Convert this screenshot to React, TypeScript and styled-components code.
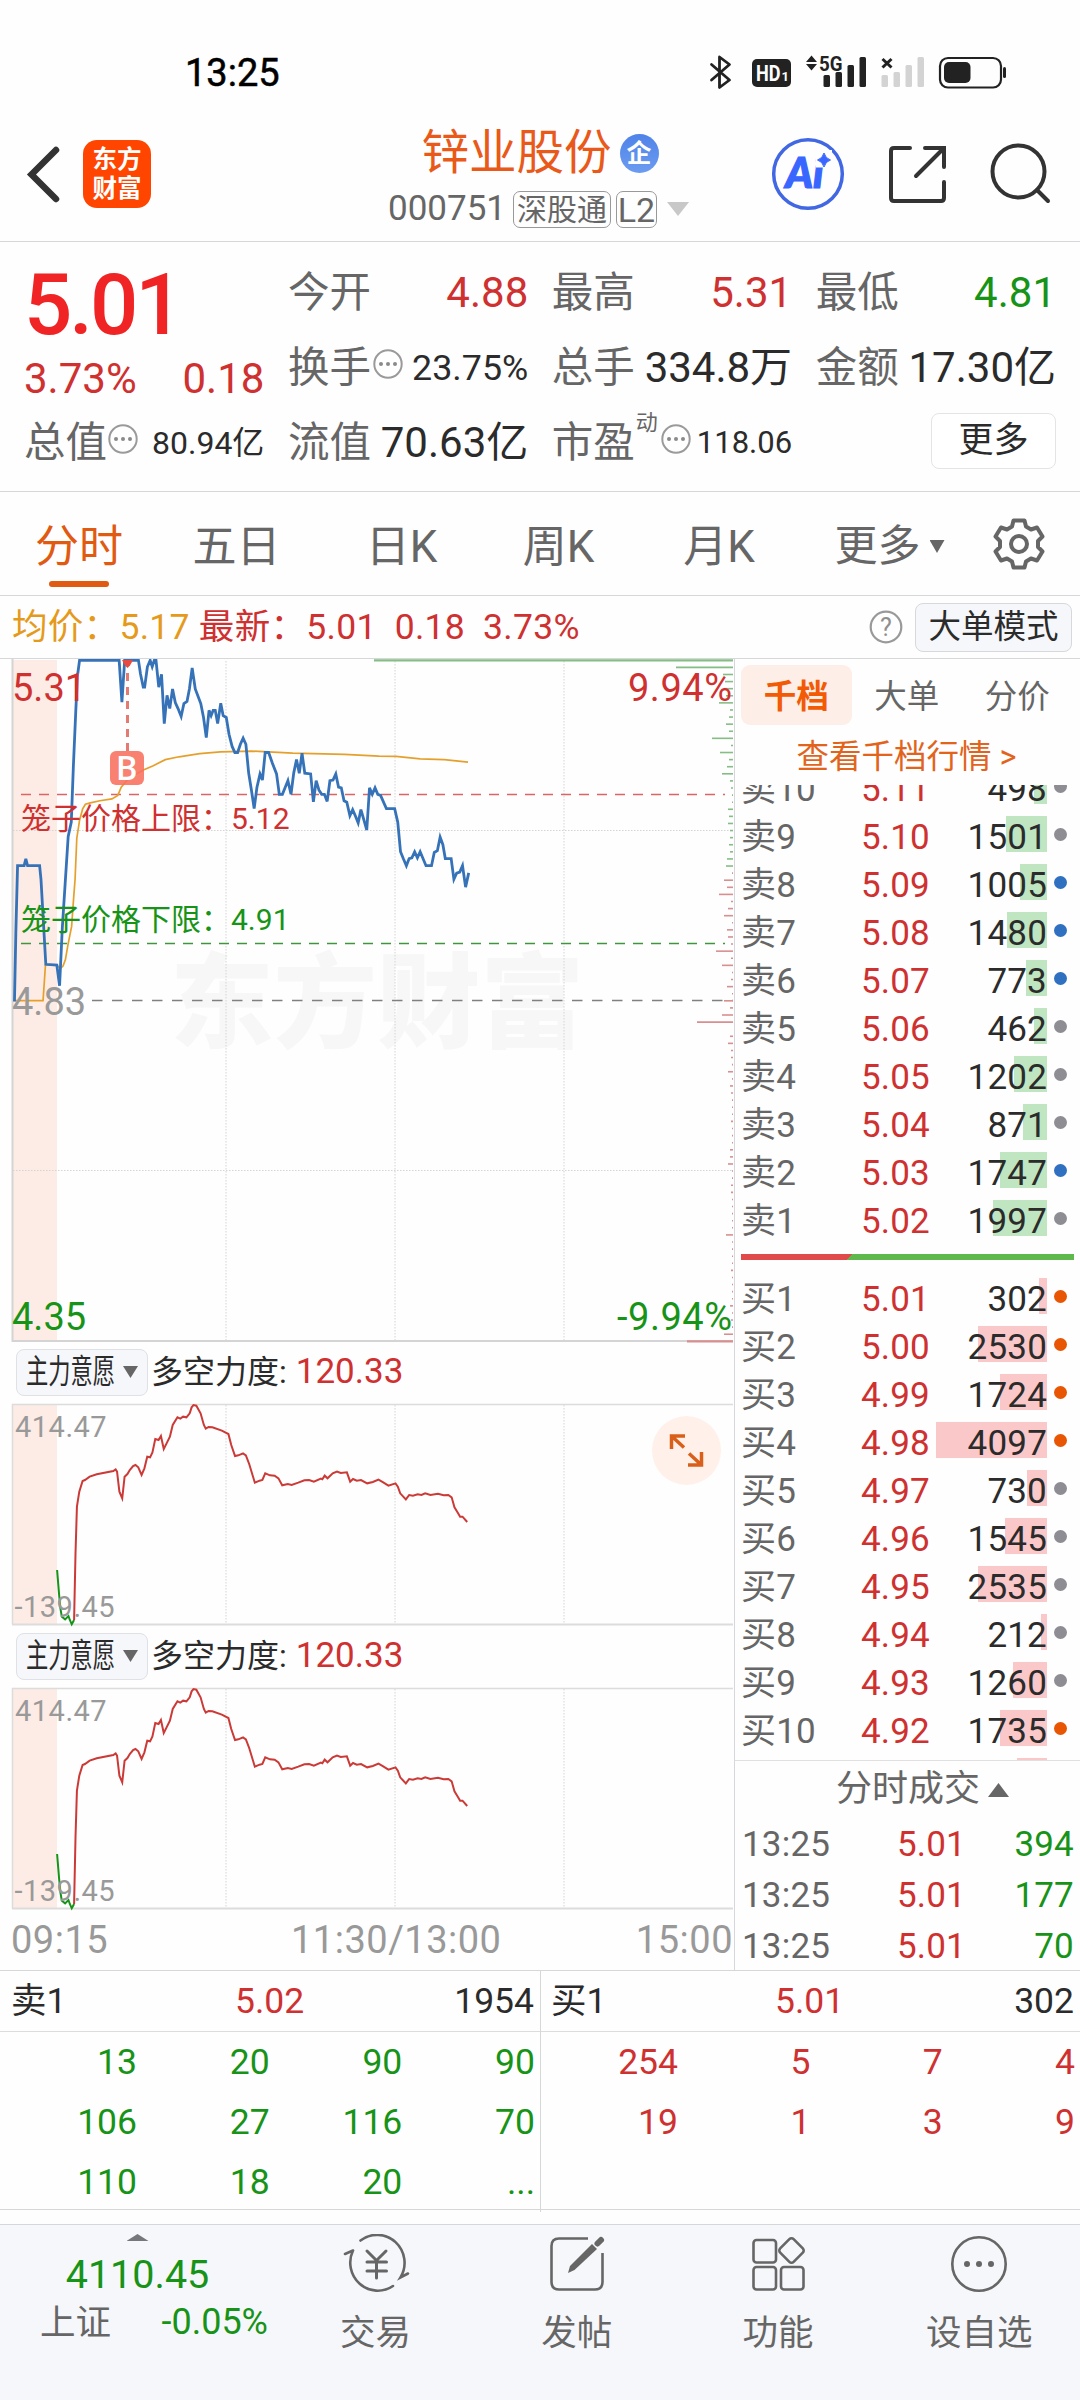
import React from "react";
import styled, { createGlobalStyle } from "styled-components";

const RED = "#cf3030";
const GREEN = "#179317";
const GRAY = "#666666";
const INK = "#2b2b2b";
const ORANGE = "#e05a12";
const LINE = "#d5d7d9";
const FONT = 'Roboto, "Noto Sans CJK SC", sans-serif';

const GlobalStyle = createGlobalStyle`
  * { box-sizing: border-box; }
  body { margin: 0; background: #fff; }
  svg { display: block; flex: none; }
`;

const Page = styled.div`
  width: 1080px;
  height: 2400px;
  overflow: hidden;
  display: flex;
  flex-direction: column;
  background: #fefefe;
  font-family: ${FONT};
  line-height: 1.2;
  color: ${INK};
  white-space: nowrap;
`;

/* ---------- status bar ---------- */
const StatusBar = styled.div`
  height: 107px;
  padding: 38px 72px 0 185px;
  display: flex;
  justify-content: space-between;
`;
const Clock = styled.div`
  height: 70px;
  line-height: 70px;
  font-size: 38px;
  -webkit-text-stroke: 0.5px #000;
  color: #000;
`;

const StatusIcons = () => (
  <svg width="300" height="38" viewBox="708 53 300 38" style={{ marginTop: 15 }}>
    <g fill="none" stroke="#222" strokeWidth="2.8" strokeLinejoin="round" strokeLinecap="round">
      <path d="M711.500 64.500L729.500 80L719.500 87.500V57L729.500 64.500L711.500 80" />
      <rect x="940" y="58" width="61" height="29.500" rx="8" strokeWidth="2.2" />
    </g>
    <g fill="#222">
      <rect x="752" y="59" width="39" height="28" rx="5" />
      <path d="M811.500 55.500L817 62H806ZM811.500 70.500L806 64H817Z" />
      <rect x="823.500" y="75" width="6.500" height="12" rx="1.500" />
      <rect x="835.500" y="72" width="6.500" height="15" rx="1.500" />
      <rect x="847.500" y="65" width="6.500" height="22" rx="1.500" />
      <rect x="859.500" y="57" width="6.500" height="30" rx="1.500" />
      <rect x="944" y="62" width="26.500" height="21" rx="5" />
      <rect x="1003" y="67" width="3" height="11" rx="1.500" />
    </g>
    <g fill="#d3d3d3">
      <rect x="881.500" y="75" width="6.500" height="12" rx="1.500" />
      <rect x="893.500" y="72" width="6.500" height="15" rx="1.500" />
      <rect x="905.500" y="65" width="6.500" height="22" rx="1.500" />
      <rect x="917.500" y="57" width="6.500" height="30" rx="1.500" />
    </g>
    <path d="M882.500 59L891.500 67.500M891.500 59L882.500 67.500" stroke="#222" strokeWidth="3" />
    <g fontFamily={FONT} fontWeight="700">
      <text x="756" y="80.500" fontSize="21.500" fill="#fff" textLength="24.500" lengthAdjust="spacingAndGlyphs">HD</text>
      <text x="781.500" y="80.500" fontSize="13" fill="#fff">1</text>
      <text x="819" y="70.500" fontSize="20" fill="#222" textLength="23.500" lengthAdjust="spacingAndGlyphs">5G</text>
    </g>
  </svg>
);

/* ---------- header ---------- */
const Header = styled.header`
  height: 135px;
  display: grid;
  grid-template-columns: 330px 1fr 330px;
  border-bottom: 1.500px solid ${LINE};
`;
const HeaderSide = styled.div<{ $end?: boolean }>`
  display: flex;
  align-items: center;
  justify-content: ${(p) => (p.$end ? "flex-end" : "flex-start")};
  padding: ${(p) => (p.$end ? "0 28px 0 0" : "0 0 0 25px")};
`;
const Logo = styled.div`
  width: 68px;
  height: 68px;
  margin-left: 20px;
  padding-top: 6px;
  border-radius: 14px;
  background: #ff4500;
  color: #fff;
  font-size: 24.500px;
  font-weight: 700;
  line-height: 28.500px;
  text-align: center;
`;
const TitleBlock = styled.div`
  padding-top: 18px;
  display: flex;
  flex-direction: column;
  align-items: center;
`;
const TitleRow = styled.div`
  height: 56px;
  display: flex;
  align-items: center;
  gap: 8px;
  font-size: 47.500px;
  line-height: 56px;
  color: #e8591a;
`;
const CorpBadge = styled.span`
  width: 39px;
  height: 39px;
  border-radius: 50%;
  background: linear-gradient(#4f83e8, #6c9cf0);
  color: #fff;
  font-size: 25px;
  font-weight: 700;
  line-height: 39px;
  text-align: center;
`;
const CodeRow = styled.div`
  height: 56px;
  padding-right: 3px;
  display: flex;
  align-items: center;
  font-size: 35px;
  color: ${GRAY};
`;
const Tag = styled.span<{ $wide?: boolean }>`
  height: 37px;
  width: ${(p) => (p.$wide ? 98 : 41)}px;
  margin-left: ${(p) => (p.$wide ? 7 : 5)}px;
  border: 1.500px solid #999;
  border-radius: 7px;
  font-size: ${(p) => (p.$wide ? 30 : 34)}px;
  line-height: 36px;
  text-align: center;
`;
const Triangle = styled.i<{ $w: number; $h: number; $c: string; $up?: boolean; $l?: number }>`
  width: ${(p) => p.$w}px;
  height: ${(p) => p.$h}px;
  margin-left: ${(p) => p.$l ?? 0}px;
  flex: none;
  background: ${(p) => p.$c};
  clip-path: ${(p) => (p.$up ? "polygon(50% 0, 100% 100%, 0 100%)" : "polygon(0 0, 100% 0, 50% 100%)")};
`;
const IconGroup = styled.div`
  display: flex;
  align-items: center;
  gap: 42px;
`;

/* ---------- quote panel ---------- */
const Quote = styled.section`
  height: 250px;
  padding: 13.500px 25px 0;
  display: grid;
  grid-template-columns: repeat(4, 1fr);
  column-gap: 25.500px;
  border-bottom: 1.500px solid ${LINE};
`;
const Cell = styled.div<{ $h?: number }>`
  height: ${(p) => p.$h ?? 75}px;
  margin: 0 -1px;
  display: flex;
  align-items: center;
  justify-content: space-between;
`;
const Label = styled.span`
  display: flex;
  align-items: center;
  font-size: 41.500px;
  color: ${GRAY};
`;
const Value = styled.span<{ $c?: string; $s?: number }>`
  font-size: ${(p) => p.$s ?? 42}px;
  color: ${(p) => p.$c ?? INK};
`;
const BigPrice = styled.div`
  height: 98px;
  line-height: 98px;
  margin-left: -1px;
  font-size: 85px;
  font-weight: 500;
  letter-spacing: -3px;
  color: #f02424;
`;
const Sup = styled.sup`
  align-self: flex-start;
  margin: -8px 3px 0 1px;
  font-size: 22px;
  line-height: 26px;
`;
const MoreButton = styled.button`
  width: 125px;
  height: 56px;
  margin: -4px 0 0 auto;
  padding: 0;
  border: 1.500px solid #e4e4e4;
  border-radius: 8px;
  background: #fff;
  font: 35px / 52px ${FONT};
  color: ${INK};
`;

const Dots = ({ m }: { m: string }) => (
  <svg width="30" height="30" viewBox="0 0 30 30" style={{ margin: m }}>
    <circle cx="15" cy="15" r="13.700" fill="none" stroke="#9a9a9a" strokeWidth="2" />
    {[8, 15, 22].map((x) => (
      <circle key={x} cx={x} cy="15" r="2" fill="#8a8a8a" />
    ))}
  </svg>
);

/* ---------- period tabs ---------- */
const Tabs = styled.nav`
  height: 104px;
  display: grid;
  grid-template-columns: 158px 157px 173px 141px 180px 161px 97px;
  align-items: center;
  justify-items: center;
  border-bottom: 1.500px solid ${LINE};
`;
const Tab = styled.div<{ $on?: boolean }>`
  height: 104px;
  padding-top: 28px;
  display: flex;
  flex-direction: column;
  align-items: center;
  font-size: 44px;
  line-height: 54px;
  color: ${(p) => (p.$on ? ORANGE : GRAY)};
  &::after {
    content: "";
    width: 60px;
    height: 6px;
    margin-top: 7px;
    border-radius: 3px;
    background: ${(p) => (p.$on ? ORANGE : "transparent")};
  }
`;
const MoreTab = styled.div`
  display: flex;
  align-items: center;
  gap: 9px;
  padding-top: 5px;
  font-size: 43px;
  color: ${GRAY};
`;

/* ---------- average line ---------- */
const InfoBar = styled.div`
  height: 63px;
  padding: 0 8px 0 12px;
  display: flex;
  align-items: center;
  font-size: 35.500px;
  color: ${RED};
  border-bottom: 1.500px solid ${LINE};
`;
const InfoText = styled.span<{ $c?: string; $l?: number }>`
  margin-left: ${(p) => p.$l ?? 0}px;
  padding-top: 1px;
  letter-spacing: 0.3px;
  color: ${(p) => p.$c ?? RED};
`;
const ModeButton = styled.button`
  width: 157px;
  height: 49px;
  margin-left: 12px;
  padding: 0;
  border: 1.500px solid #d6d8db;
  border-radius: 8px;
  background: #f6f7fa;
  font: 32.500px / 46px ${FONT};
  color: ${INK};
`;

/* ---------- main area ---------- */
const Main = styled.main`
  height: 1312px;
  display: flex;
  border-bottom: 1.500px solid ${LINE};
`;
const ChartColumn = styled.section`
  width: 735px;
  border-right: 1.500px solid ${LINE};
`;
const IndicatorBar = styled.div`
  height: 58px;
  padding-left: 16px;
  display: flex;
  align-items: center;
  font-size: 32px;
`;
const IndicatorButton = styled.button`
  width: 132px;
  height: 47px;
  margin-right: 3px;
  padding: 0 9px 0 9px;
  display: flex;
  align-items: center;
  justify-content: space-between;
  border: 1.500px solid #dfe1e5;
  border-radius: 8px;
  background: #f6f7fa;
  font: 33px / 42px ${FONT};
  color: ${INK};
`;
const Condensed = styled.span`
  width: 89px;
  transform: scaleX(0.675);
  transform-origin: 0 50%;
`;
const IndicatorValue = styled.span`
  margin-left: 9px;
  font-size: 35px;
  color: ${RED};
`;
const TimeAxis = styled.div`
  height: 59px;
  padding: 0 1px 0 11px;
  display: grid;
  grid-template-columns: 280px auto 1fr;
  align-items: center;
  font-size: 38px;
  letter-spacing: 0.5px;
  color: #999;
`;
const AxisEnd = styled.span`
  text-align: right;
`;

const PRICE_LINE =
  "42,1432 46,1240 51,1052 70,1052 75,1033 80,1052 115,1052 119,1090 133,1328 165,1330 173,1388 181,1225 184,1180 198,970 207,930 213,775 220,620 225,520 231,477 346,477 354,594 362,477 402,477 408,515 416,552 420,552 428,495 436,477 442,495 448,477 453,477 461,552 469,516 477,654 485,575 493,612 501,557 509,595 517,612 526,634 534,598 543,592 550,557 558,498 567,557 583,598 591,637 599,693 607,617 613,632 619,617 625,617 632,654 641,597 648,632 657,637 665,684 674,718 682,735 690,735 698,712 706,695 714,712 722,792 730,840 738,892 746,833 755,795 762,812 770,735 780,735 791,765 803,795 811,852 820,852 828,833 836,814 845,852 853,792 861,755 869,793 877,737 885,793 902,795 910,873 918,814 926,840 934,852 942,852 950,872 958,814 967,812 975,795 983,832 991,834 999,870 1007,874 1016,912 1024,895 1032,913 1040,932 1048,895 1057,925 1065,952 1073,834 1081,852 1089,834 1097,852 1105,855 1122,892 1146,892 1155,930 1163,1013 1171,1032 1180,1052 1188,1032 1196,1030 1204,1013 1212,1030 1220,1013 1237,1052 1253,1052 1261,1015 1270,1010 1278,972 1286,993 1293,1032 1310,1032 1318,1090 1326,1073 1335,1070 1343,1052 1352,1112 1361,1072";
const AVERAGE_LINE =
  "42,1430 125,1430 132,1330 165,1330 175,1340 183,1333 190,1315 197,1275 208,1222 214,1140 218,1090 223,975 231,925 240,893 248,880 262,876 290,870 325,865 342,855 352,832 370,812 395,795 418,783 445,772 480,755 520,747 580,738 640,733 730,731 850,737 1000,740 1100,745 1150,746 1220,753 1290,755 1359,762";
const FORCE_DOWN = "121,810 125,880 128,925 131,950 138,958 145,948 148,960 152,973 157,960";
const FORCE_UP =
  "157,960 160,760 163,620 168,575 175,543 180,540 190,530 205,523 240,513 245,508 248,515 253,575 259,595 264,530 270,522 275,510 282,498 287,495 293,502 300,525 306,505 312,470 318,472 323,457 329,417 336,420 341,408 347,447 353,430 360,410 366,375 376,352 382,356 388,350 395,352 402,340 406,322 410,315 416,317 425,340 432,375 436,386 442,381 450,382 470,392 484,402 490,435 498,468 505,466 515,460 521,466 528,492 540,548 550,542 556,540 562,520 572,526 582,527 590,535 598,556 610,552 618,555 632,548 645,541 655,540 665,545 680,536 683,538 688,527 694,535 705,520 714,515 722,519 735,517 742,545 748,537 756,542 765,540 778,550 790,546 802,539 812,547 823,557 838,550 843,560 848,580 860,598 867,585 875,587 885,583 893,585 901,580 912,585 928,581 940,586 950,585 957,592 963,622 970,638 975,650 980,650 990,666";

/* traded volume at each price step, from the upper limit to the lower one */
const VOLUME = [
  359, 57, 10, 8, 9, 7, 14, 3, 4, 7, 4, 21, 2, 13, 4, 6, 11, 3, 2, 1, 1, 5, 4, 5, 3, 3, 4, 3, 6, 7, 1, 9, 6, 14, 2, 5,
  9, 1, 6, 5, 2, 17, 2, 11, 1, 2, 6, 1, 9, 3, 11, 36, 0, 3, 5, 2, 2, 1, 5, 1, 3, 2, 1, 1, 1, 2, 1, 1, 1, 3, 3, 5, 1, 1,
  2, 2, 1, 1, 1, 1, 1, 7, 1, 1, 1, 1, 2, 1, 1, 1, 1, 3, 1, 2, 1, 9, 46,
];

const VerticalGrid = ({ y1, y2 }: { y1: number; y2: number }) => (
  <g stroke="#d4d4d4" strokeWidth="1" strokeDasharray="1.500 1.500">
    {[226, 395, 564].map((x) => (
      <line key={x} x1={x} x2={x} y1={y1} y2={y2} />
    ))}
  </g>
);

const PriceChart = () => (
  <svg width="733" height="684" viewBox="0 659 733 684">
    <text x="170" y="1040" fontFamily={FONT} fontWeight="900" fontSize="103.500" fill="#f7f7f7">东方财富</text>
    <rect x="13" y="660" width="44" height="681" fill="#fdece5" />
    <VerticalGrid y1={661} y2={1341} />
    <g stroke="#d4d4d4" strokeDasharray="1.500 1.500">
      <line x1="13" x2="733" y1="830.500" y2="830.500" />
      <line x1="13" x2="733" y1="1170.500" y2="1170.500" />
    </g>
    <path d="M12.500 659V1341H733" fill="none" stroke="#d4d4d4" strokeWidth="2" />
    <line x1="21" x2="725" y1="794.500" y2="794.500" stroke="#dc6464" strokeWidth="1.500" strokeDasharray="10 8" />
    <line x1="21" x2="725" y1="943.500" y2="943.500" stroke="#3f963f" strokeWidth="1.500" strokeDasharray="10 8" />
    <line x1="92" x2="733" y1="1000.500" y2="1000.500" stroke="#808080" strokeWidth="1.500" strokeDasharray="10.500 9.500" />
    {VOLUME.map((v, i) => (
      <line
        key={i}
        x1={733 - v}
        x2="733"
        y1={660.3 + i * 7.094}
        y2={660.3 + i * 7.094}
        stroke={i < 30 ? "#85bd85" : "#d88f8f"}
        strokeWidth={i === 0 || i === 96 ? 2.2 : 1.6}
      />
    ))}
    <svg x="0" y="490" width="540" height="560" viewBox="0 0 1568 1568" preserveAspectRatio="none" fill="none">
      <polyline points={AVERAGE_LINE} stroke="#e5a02c" strokeWidth="1.700" vectorEffect="non-scaling-stroke" />
      <polyline points={PRICE_LINE} stroke="#3672b8" strokeWidth="2.800" vectorEffect="non-scaling-stroke" />
    </svg>
    <path d="M122 660H133L130 665.500L127.500 668L125 665.500Z" fill="#e84a42" />
    <line x1="127.500" x2="127.500" y1="673" y2="751" stroke="#e37b72" strokeWidth="3" strokeDasharray="8 6" />
    <rect x="110" y="751" width="34" height="34" rx="6" fill="#f86f5f" opacity="0.88" />
    <g fontFamily={FONT}>
      <text x="127" y="779.500" textAnchor="middle" fontSize="33" fontWeight="500" fill="#fff">B</text>
      <g fontSize="38">
        <text x="12" y="701" fill={RED}>5.31</text>
        <text x="12" y="1015" fill="#999">4.83</text>
        <text x="12" y="1330" fill={GREEN}>4.35</text>
        <text x="732" y="701" fill={RED} textAnchor="end" textLength="104">9.94%</text>
        <text x="732" y="1330" fill={GREEN} textAnchor="end" textLength="115">-9.94%</text>
      </g>
      <g fontSize="30">
        <text x="21" y="829" fill={RED}>笼子价格上限：5.12</text>
        <text x="21" y="930" fill={GREEN}>笼子价格下限：4.91</text>
      </g>
    </g>
  </svg>
);

const ForceChart = ({ expand }: { expand?: boolean }) => (
  <svg width="733" height="226" viewBox="0 1401 733 226">
    <rect x="13" y="1405" width="44" height="219" fill="#fdece5" />
    <VerticalGrid y1={1405} y2={1624} />
    <path d="M733 1404.500H12.500V1624.500" fill="none" stroke="#dcdcdc" strokeWidth="1.500" />
    <path d="M12 1624.500H733" stroke="#dcdcdc" strokeWidth="2" />
    <svg x="0" y="1300" width="740" height="340" viewBox="0 0 1568 1020" preserveAspectRatio="none" fill="none">
      <polyline points={FORCE_DOWN} stroke={GREEN} strokeWidth="2" vectorEffect="non-scaling-stroke" />
      <polyline points={FORCE_UP} stroke="#cb3a36" strokeWidth="2" vectorEffect="non-scaling-stroke" />
    </svg>
    <g fontFamily={FONT} fontSize="29" fill="#999" letterSpacing="0.500">
      <text x="15" y="1437">414.47</text>
      <text x="14.500" y="1617">-139.45</text>
    </g>
    {expand && (
      <g>
        <circle cx="686.500" cy="1450.500" r="34.500" fill="#fff1ea" />
        <path
          d="M685 1436H671.500V1449M671.500 1436L684 1447.500M688 1465H701.500V1452M701.500 1465L689 1453.500"
          fill="none"
          stroke="#d9601a"
          strokeWidth="3.500"
        />
      </g>
    )}
  </svg>
);

const Indicator = () => (
  <IndicatorBar>
    <IndicatorButton>
      <Condensed>主力意愿</Condensed>
      <Triangle $w={15} $h={12} $c="#666" />
    </IndicatorButton>
    多空力度:
    <IndicatorValue>120.33</IndicatorValue>
  </IndicatorBar>
);

/* ---------- order book ---------- */
const BookColumn = styled.section`
  flex: 1;
  padding-top: 6px;
`;
const BookTabs = styled.div`
  height: 60px;
  padding-left: 6px;
  display: flex;
`;
const BookTab = styled.div<{ $on?: boolean }>`
  width: 110.500px;
  border-radius: 9px;
  background: ${(p) => (p.$on ? "#fdeee7" : "transparent")};
  color: ${(p) => (p.$on ? "#f25a05" : GRAY)};
  font-size: 32.500px;
  font-weight: ${(p) => (p.$on ? 700 : 400)};
  line-height: 65px;
  text-align: center;
`;
const BookLink = styled.div`
  height: 60px;
  padding-right: 2px;
  line-height: 65px;
  text-align: center;
  font-size: 32.500px;
  color: #e2641c;
`;
const BookList = styled.div`
  height: 976px;
  overflow: hidden;
  border-bottom: 1.500px solid #e0e0e0;
`;
const BookSide = styled.div<{ $shift?: number }>`
  margin-top: ${(p) => p.$shift ?? 0}px;
`;
const BookRow = styled.div`
  height: 48px;
  padding-left: 6px;
  display: grid;
  grid-template-columns: 91px 98px 117px 7px 13px;
  font-size: 35px;
  line-height: 43px;
  letter-spacing: 0.2px;
`;
const Level = styled.span`
  color: ${GRAY};
`;
const Price = styled.span`
  text-align: right;
  color: ${RED};
`;
const Volume = styled.span<{ $bar: number; $sell?: boolean }>`
  height: 36px;
  text-align: right;
  background: linear-gradient(${(p) => (p.$sell ? "#bfe6c1, #bfe6c1" : "#fac8c9, #fac8c9")}) right top /
    ${(p) => p.$bar}px 36px no-repeat;
`;
const LastVolume = styled(Volume)`
  grid-column: 3;
`;
const Dot = styled.i<{ $c: string }>`
  grid-column: 5;
  width: 13px;
  height: 13px;
  margin-top: 11.500px;
  border-radius: 50%;
  background: ${(p) => p.$c};
`;
const Balance = styled.div`
  height: 6px;
  margin: 6px 6px 18px 6px;
  background: linear-gradient(135deg, #e04a4a 0 78.500px, #5fb84b 78.500px);
`;

const DOT = { g: "#8e8d94", b: "#2f70c0", o: "#e85604" };
type Dotted = [string, string, number, keyof typeof DOT];
const SELLS: Dotted[] = [
  ["卖10", "5.11", 498, "g"],
  ["卖9", "5.10", 1501, "g"],
  ["卖8", "5.09", 1005, "b"],
  ["卖7", "5.08", 1480, "b"],
  ["卖6", "5.07", 773, "b"],
  ["卖5", "5.06", 462, "g"],
  ["卖4", "5.05", 1202, "g"],
  ["卖3", "5.04", 871, "g"],
  ["卖2", "5.03", 1747, "b"],
  ["卖1", "5.02", 1997, "g"],
];
const BUYS: Dotted[] = [
  ["买1", "5.01", 302, "o"],
  ["买2", "5.00", 2530, "o"],
  ["买3", "4.99", 1724, "o"],
  ["买4", "4.98", 4097, "o"],
  ["买5", "4.97", 730, "g"],
  ["买6", "4.96", 1545, "g"],
  ["买7", "4.95", 2535, "g"],
  ["买8", "4.94", 212, "g"],
  ["买9", "4.93", 1260, "g"],
  ["买10", "4.92", 1735, "o"],
];

const Rows = ({ data, sell }: { data: Dotted[]; sell?: boolean }) => (
  <>
    {data.map(([level, price, volume, dot]) => (
      <BookRow key={level}>
        <Level>{level}</Level>
        <Price>{price}</Price>
        <Volume $sell={sell} $bar={Math.round((volume * 111) / 4097)}>{volume}</Volume>
        <Dot $c={DOT[dot]} />
      </BookRow>
    ))}
  </>
);

const DealsTitle = styled.div`
  height: 58px;
  padding-left: 30px;
  display: flex;
  align-items: center;
  justify-content: center;
  gap: 8px;
  font-size: 36px;
  color: ${GRAY};
`;
const DealRow = styled.div`
  height: 51px;
  padding: 0 6px 0 7px;
  display: grid;
  grid-template-columns: 120px 104px 1fr;
  font-size: 35px;
  line-height: 52px;
  letter-spacing: 0.2px;
  text-align: right;
`;
const DealTime = styled.span`
  text-align: left;
  color: ${GRAY};
`;
const DealVolume = styled.span`
  color: ${GREEN};
`;

/* ---------- queue ---------- */
const Queue = styled.section`
  height: 239px;
  display: grid;
  grid-template-columns: 540px 540px;
  border-bottom: 1.500px solid ${LINE};
`;
const QueueSide = styled.div<{ $divided?: boolean }>`
  border-left: ${(p) => (p.$divided ? `1.500px solid ${LINE}` : "0")};
  font-size: 35.500px;
`;
const QueueHead = styled.div<{ $l: number }>`
  height: 61px;
  padding: 0 6px 0 ${(p) => p.$l}px;
  display: grid;
  grid-template-columns: 224px 1fr auto;
  line-height: 61px;
  border-bottom: 1.500px solid #dcdcdc;
`;
const QueueGrid = styled.div<{ $c: string }>`
  padding-right: 5px;
  display: grid;
  grid-template-columns: 137px repeat(3, 1fr);
  grid-auto-rows: 60px;
  line-height: 61px;
  text-align: right;
  color: ${(p) => p.$c};
`;

/* ---------- bottom bar ---------- */
const BottomBar = styled.footer`
  height: 176px;
  margin-top: 14px;
  display: flex;
  background: #f6f7fa;
  border-top: 1.500px solid ${LINE};
`;
const IndexBox = styled.div`
  width: 275px;
  padding-top: 9px;
  display: flex;
  flex-direction: column;
  align-items: center;
  color: ${GREEN};
`;
const IndexValue = styled.div`
  height: 56px;
  margin-top: 6px;
  line-height: 56px;
  font-size: 39.500px;
`;
const IndexLine = styled.div`
  width: 228px;
  height: 46px;
  margin: -3px 0 0 40px;
  align-self: flex-start;
  display: flex;
  align-items: center;
  justify-content: space-between;
  font-size: 36px;
`;
const IndexName = styled.span`
  font-size: 35.500px;
  color: ${GRAY};
`;
const NavItem = styled.div`
  flex: 1;
  padding-top: 9px;
  display: flex;
  flex-direction: column;
  align-items: center;
  font-size: 35.500px;
  line-height: 50px;
  color: ${GRAY};
`;
const NavIcon = styled.svg`
  width: 70px;
  height: 64px;
  margin-bottom: 10px;
  fill: none;
  stroke: ${GRAY};
  stroke-width: 2.6px;
`;

export default function App() {
  return (
    <Page>
      <GlobalStyle />
      <StatusBar>
        <Clock>13:25</Clock>
        <StatusIcons />
      </StatusBar>

      <Header>
        <HeaderSide>
          <svg width="38" height="60" viewBox="0 0 38 60">
            <path d="M31 6L6.500 30.500L31 55" fill="none" stroke="#333" strokeWidth="6.500" strokeLinecap="round" />
          </svg>
          <Logo>
            东方
            <br />
            财富
          </Logo>
        </HeaderSide>
        <TitleBlock>
          <TitleRow>
            锌业股份<CorpBadge>企</CorpBadge>
          </TitleRow>
          <CodeRow>
            000751
            <Tag $wide>深股通</Tag>
            <Tag>L2</Tag>
            <Triangle $w={22} $h={14} $l={10} $c="#c8c8c8" />
          </CodeRow>
        </TitleBlock>
        <HeaderSide $end>
          <IconGroup>
            <svg width="76" height="76" viewBox="0 0 76 76">
              <circle cx="38" cy="38" r="34.300" fill="none" stroke="#4167e3" strokeWidth="3.500" />
              <text
                x="15.500"
                y="52"
                fontFamily="Lato, Roboto, sans-serif"
                fontWeight="900"
                fontStyle="italic"
                fontSize="42"
                fill="#3866ff"
                stroke="#3866ff"
                strokeWidth="1.200"
              >
                Ai
              </text>
              <rect x="46" y="14" width="16" height="17.500" fill="#fefefe" />
              <path d="M54 17Q55.500 22.500 60.500 24Q55.500 25.500 54 31Q52.500 25.500 47.500 24Q52.500 22.500 54 17Z" fill="#3866ff" stroke="#3866ff" strokeWidth="1" />
            </svg>
            <svg width="60" height="60" viewBox="0 0 60 60" fill="none" stroke="#333" strokeWidth="4" strokeLinecap="round">
              <path d="M22 4H6Q3 4 3 7V54Q3 57 6 57H53Q56 57 56 54V38M37 4H56V23M55 5L28 32" />
            </svg>
            <svg width="62" height="62" viewBox="0 0 62 62" fill="none" stroke="#333" strokeWidth="4" strokeLinecap="round">
              <circle cx="28.500" cy="28.500" r="26" />
              <path d="M47 47L58 58" />
            </svg>
          </IconGroup>
        </HeaderSide>
      </Header>

      <Quote>
        <div>
          <BigPrice>5.01</BigPrice>
          <Cell $h={52}>
            <Value $c={RED}>3.73%</Value>
            <Value $c={RED}>0.18</Value>
          </Cell>
          <Cell>
            <Label>总值<Dots m="-7px 0 0 1px" /></Label>
            <Value $s={32}>80.94亿</Value>
          </Cell>
        </div>
        <div>
          <Cell>
            <Label>今开</Label>
            <Value $c={RED}>4.88</Value>
          </Cell>
          <Cell>
            <Label>换手<Dots m="-8px 0 0 2px" /></Label>
            <Value $s={35.8}>23.75%</Value>
          </Cell>
          <Cell>
            <Label>流值</Label>
            <Value>70.63亿</Value>
          </Cell>
        </div>
        <div>
          <Cell>
            <Label>最高</Label>
            <Value $c={RED}>5.31</Value>
          </Cell>
          <Cell>
            <Label>总手</Label>
            <Value>334.8万</Value>
          </Cell>
          <Cell>
            <Label>市盈<Sup>动</Sup><Dots m="-7px 0 0 0" /></Label>
            <Value $s={31}>118.06</Value>
          </Cell>
        </div>
        <div>
          <Cell>
            <Label>最低</Label>
            <Value $c={GREEN}>4.81</Value>
          </Cell>
          <Cell>
            <Label>金额</Label>
            <Value>17.30亿</Value>
          </Cell>
          <Cell>
            <MoreButton>更多</MoreButton>
          </Cell>
        </div>
      </Quote>

      <Tabs>
        <Tab $on>分时</Tab>
        <Tab>五日</Tab>
        <Tab>日K</Tab>
        <Tab>周K</Tab>
        <Tab>月K</Tab>
        <MoreTab>
          更多
          <Triangle $w={15} $h={13} $c="#666" />
        </MoreTab>
        <svg width="52" height="52" viewBox="0 0 52 52" fill="none" stroke="#666" strokeWidth="4" strokeLinejoin="round">
          <path d="M20.500 2.500H31.500L33 8.500L38 11.500L44 9.500L49.500 18.500L45 23V29L49.500 33.500L44 42.500L38 40.500L33 43.500L31.500 49.500H20.500L19 43.500L14 40.500L8 42.500L2.500 33.500L7 29V23L2.500 18.500L8 9.500L14 11.500L19 8.500Z" />
          <circle cx="26" cy="26" r="8" />
        </svg>
      </Tabs>

      <InfoBar>
        <InfoText $c="#e59a1c">均价：5.17</InfoText>
        <InfoText $l={9}>最新：5.01</InfoText>
        <InfoText $l={18}>0.18</InfoText>
        <InfoText $l={18}>3.73%</InfoText>
        <svg width="34" height="34" viewBox="0 0 34 34" style={{ marginLeft: "auto" }}>
          <circle cx="17" cy="17" r="15.300" fill="none" stroke="#999" strokeWidth="2.200" />
          <text x="17" y="26" textAnchor="middle" fontFamily={FONT} fontSize="25" fill="#8f8f8f">?</text>
        </svg>
        <ModeButton>大单模式</ModeButton>
      </InfoBar>

      <Main>
        <ChartColumn>
          <PriceChart />
          <Indicator />
          <ForceChart expand />
          <Indicator />
          <ForceChart />
          <TimeAxis>
            <span>09:15</span>
            <span>11:30/13:00</span>
            <AxisEnd>15:00</AxisEnd>
          </TimeAxis>
        </ChartColumn>
        <BookColumn>
          <BookTabs>
            <BookTab $on>千档</BookTab>
            <BookTab>大单</BookTab>
            <BookTab>分价</BookTab>
          </BookTabs>
          <BookLink>查看千档行情 &gt;</BookLink>
          <BookList>
            <BookSide $shift={-17}>
              <Rows data={SELLS} sell />
            </BookSide>
            <Balance />
            <BookSide>
              <Rows data={BUYS} />
              <BookRow>
                <LastVolume $bar={30} />
              </BookRow>
            </BookSide>
          </BookList>
          <DealsTitle>
            分时成交
            <Triangle $w={21} $h={14} $c="#666" $up />
          </DealsTitle>
          {[394, 177, 70].map((v) => (
            <DealRow key={v}>
              <DealTime>13:25</DealTime>
              <Price>5.01</Price>
              <DealVolume>{v}</DealVolume>
            </DealRow>
          ))}
        </BookColumn>
      </Main>

      <Queue>
        <QueueSide>
          <QueueHead $l={11}>
            <span>卖1</span>
            <Value $s={35.5} $c={RED}>5.02</Value>
            <span>1954</span>
          </QueueHead>
          <QueueGrid $c={GREEN}>
            {["13", "20", "90", "90", "106", "27", "116", "70", "110", "18", "20", "..."].map((v, i) => (
              <span key={i}>{v}</span>
            ))}
          </QueueGrid>
        </QueueSide>
        <QueueSide $divided>
          <QueueHead $l={10}>
            <span>买1</span>
            <Value $s={35.5} $c={RED}>5.01</Value>
            <span>302</span>
          </QueueHead>
          <QueueGrid $c={RED}>
            {["254", "5", "7", "4", "19", "1", "3", "9"].map((v, i) => (
              <span key={i}>{v}</span>
            ))}
          </QueueGrid>
        </QueueSide>
      </Queue>

      <BottomBar>
        <IndexBox>
          <Triangle $w={22} $h={7} $c="#76777a" $up />
          <IndexValue>4110.45</IndexValue>
          <IndexLine>
            <IndexName>上证</IndexName>
            <span>-0.05%</span>
          </IndexLine>
        </IndexBox>
        <NavItem>
          <NavIcon viewBox="340 2234 70 64" strokeLinecap="round">
            <path d="M359.500 2240.500A27.500 28 0 0 1 399.500 2277.500L407 2273.500M352 2250.500L344 2254M352 2250.500A27.500 28 0 0 0 392 2286" />
            <path d="M366 2251L375.500 2260.500L385 2251M375.500 2260.500V2278M366 2262H385.500M366 2271H385.500" strokeWidth="3" />
          </NavIcon>
          交易
        </NavItem>
        <NavItem>
          <NavIcon viewBox="542 2234 70 64">
            <path d="M588 2238.500H559Q551.500 2238.500 551.500 2246V2282Q551.500 2289.500 559 2289.500H595Q602.500 2289.500 602.500 2282V2253" />
            <path d="M568 2273L570 2266L592 2244L597 2249L574.500 2270Z" fill="#666" stroke="none" />
            <path d="M597.500 2243.500L601 2240" strokeWidth="6" strokeLinecap="round" />
          </NavIcon>
          发帖
        </NavItem>
        <NavItem>
          <NavIcon viewBox="743 2234 70 64">
            <rect x="753.500" y="2240" width="22.500" height="22.500" rx="3" />
            <rect x="753.500" y="2267" width="22.500" height="22.500" rx="3" />
            <rect x="781" y="2267" width="22.500" height="22.500" rx="3" />
            <rect x="782" y="2241" width="19" height="19" rx="3" transform="rotate(45 791.5 2250.5)" />
          </NavIcon>
          功能
        </NavItem>
        <NavItem>
          <NavIcon viewBox="944 2234 70 64">
            <circle cx="979" cy="2264" r="26.700" />
            {[967, 979, 991].map((x) => (
              <circle key={x} cx={x} cy="2264" r="3" fill="#666" stroke="none" />
            ))}
          </NavIcon>
          设自选
        </NavItem>
      </BottomBar>
    </Page>
  );
}
